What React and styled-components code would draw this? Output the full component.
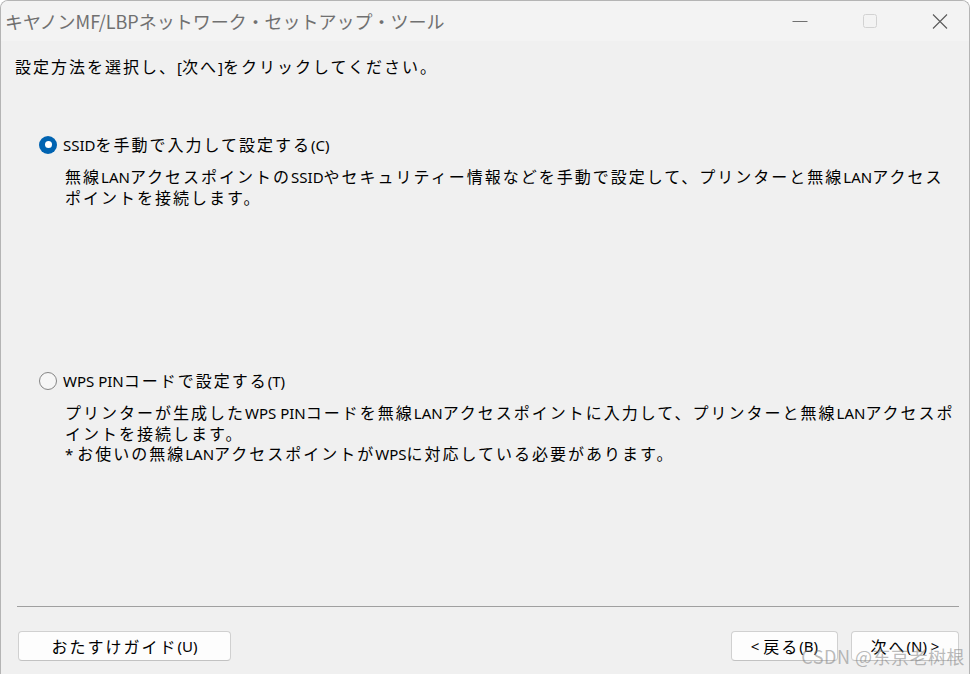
import React, { useState } from "react"
import styled, { createGlobalStyle } from "styled-components"

const GlobalStyle = createGlobalStyle`
  html, body {
    margin: 0;
    padding: 0;
    background: #ffffff;
    overflow: hidden;
  }
  body {
    font-family: "Noto Sans CJK JP", "Noto Sans", sans-serif;
  }
`;

const Window = styled.div`
  position: relative;
  box-sizing: border-box;
  width: 970px;
  height: 674px;
  display: flex;
  flex-direction: column;
  background: #f0f0f0;
  border: 1px solid #b4b4b4;
  border-bottom: none;
  border-radius: 8px 8px 0 0;
  overflow: hidden;
`;

const TitleBar = styled.div`
  height: 40px;
  flex: none;
  display: flex;
  align-items: center;
  padding-left: 4px;
  background: #f3f3f3;
`;

const TitleText = styled.span`
  font-family: "Noto Sans CJK JP", "Noto Sans", sans-serif;
  font-size: 18px;
  color: #707070;
  line-height: 1;
  margin-top: -1px;
`;

const TitleControls = styled.div`
  margin-left: auto;
  display: flex;
  align-items: center;
  gap: 54px;
  padding-right: 21px;
`;

const ControlIcon = styled.svg`
  width: 16px;
  height: 16px;
  display: block;
`;

const Body = styled.div`
  flex: 1;
  min-height: 0;
  display: flex;
  flex-direction: column;
  padding: 15px 10px 14px 14px;
`;

const Text = styled.div`
  font-size: 16px;
  letter-spacing: 2px;
  line-height: 20px;
  color: #000;
  white-space: nowrap;
`;

const En = styled.span`
  font-family: "Noto Sans", sans-serif;
  font-size: 15px;
  letter-spacing: 0;
`;

const Options = styled.div`
  margin-top: 57px;
  display: flex;
  flex-direction: column;
`;

const Option = styled.div`
  min-height: 236px;
  padding-left: 24px;
`;

const OptionHead = styled.label`
  display: flex;
  align-items: center;
  gap: 6px;
  cursor: default;
`;

const Radio = styled.span`
  box-sizing: border-box;
  width: 18px;
  height: 18px;
  border-radius: 50%;
  flex: none;
  display: flex;
  align-items: center;
  justify-content: center;
  background: ${p => (p.checked ? "#0063b1" : "#f6f6f6")};
  border: ${p => (p.checked ? "none" : "1.5px solid #858585")};

  &::after {
    content: "";
    width: 7px;
    height: 7px;
    border-radius: 50%;
    background: #fff;
    display: ${p => (p.checked ? "block" : "none")};
  }
`;

const Desc = styled(Text)`
  margin-top: 11px;
  margin-left: 26px;
`;

const Spacer = styled.div`
  flex: 1;
`;

const Separator = styled.div`
  height: 1px;
  flex: none;
  margin-left: 2px;
  background: #a0a0a0;
`;

const Footer = styled.div`
  margin-top: 24px;
  height: 30px;
  flex: none;
  display: flex;
  align-items: center;
  padding-left: 3px;
`;

const Button = styled.button`
  box-sizing: border-box;
  height: 30px;
  width: ${p => p.w}px;
  margin-left: ${p => p.ml || 0}px;
  background: #fdfdfd;
  border: 1px solid #d0d0d0;
  border-bottom-color: #c2c2c2;
  border-radius: 4px;
  font-family: "Noto Sans CJK JP", "Noto Sans", sans-serif;
  font-size: 16px;
  line-height: 1;
  letter-spacing: 2px;
  color: #000;
  padding: 0;
  display: flex;
  align-items: center;
  justify-content: center;
`;

const Watermark = styled.div`
  position: absolute;
  right: 4px;
  bottom: 5px;
  font-family: "Noto Sans CJK SC", "Noto Sans", sans-serif;
  font-size: 18px;
  letter-spacing: 0.5px;
  color: rgba(130, 130, 130, 0.55);
  pointer-events: none;
`;

export default function App() {
  const [mode, setMode] = useState("ssid");

  return (
    <>
      <GlobalStyle />
      <Window>
        <TitleBar>
          <TitleText>キヤノンMF/LBPネットワーク・セットアップ・ツール</TitleText>
          <TitleControls>
            <ControlIcon viewBox="0 0 16 16">
              <line x1="0.5" y1="8.5" x2="15.5" y2="8.5" stroke="#707070" strokeWidth="1" />
            </ControlIcon>
            <ControlIcon viewBox="0 0 16 16">
              <rect x="1.5" y="1.5" width="13" height="13" rx="2" fill="none" stroke="#d2d2d2" strokeWidth="1" />
            </ControlIcon>
            <ControlIcon viewBox="0 0 16 16">
              <path d="M1 1.5 L15 15.5 M15 1.5 L1 15.5" stroke="#5a5a5a" strokeWidth="1.1" fill="none" />
            </ControlIcon>
          </TitleControls>
        </TitleBar>

        <Body>
          <Text>設定方法を選択し、<En>[</En>次へ<En>]</En>をクリックしてください。</Text>

          <Options>
            <Option>
              <OptionHead onClick={() => setMode("ssid")}>
                <Radio checked={mode === "ssid"} />
                <Text><En>SSID</En>を手動で入力して設定する<En>(C)</En></Text>
              </OptionHead>
              <Desc>
                無線<En>LAN</En>アクセスポイントの<En>SSID</En>やセキュリティー情報などを手動で設定して、プリンターと無線<En>LAN</En>アクセス
                <br />
                ポイントを接続します。
              </Desc>
            </Option>
            <Option>
              <OptionHead onClick={() => setMode("wps")}>
                <Radio checked={mode === "wps"} />
                <Text><En>WPS PIN</En>コードで設定する<En>(T)</En></Text>
              </OptionHead>
              <Desc>
                プリンターが生成した<En>WPS PIN</En>コードを無線<En>LAN</En>アクセスポイントに入力して、プリンターと無線<En>LAN</En>アクセスポ
                <br />
                イントを接続します。
                <br />
                <En>* </En>お使いの無線<En>LAN</En>アクセスポイントが<En>WPS</En>に対応している必要があります。
              </Desc>
            </Option>
          </Options>

          <Spacer />
          <Separator />

          <Footer>
            <Button w={213}>おたすけガイド<En>(U)</En></Button>
            <Spacer />
            <Button w={107}><En>&lt;&nbsp;</En>戻る<En>(B)</En></Button>
            <Button w={108} ml={13}>次へ<En>(N)&nbsp;&gt;</En></Button>
          </Footer>
        </Body>

        <Watermark>CSDN @东京老树根</Watermark>
      </Window>
    </>
  );
}
